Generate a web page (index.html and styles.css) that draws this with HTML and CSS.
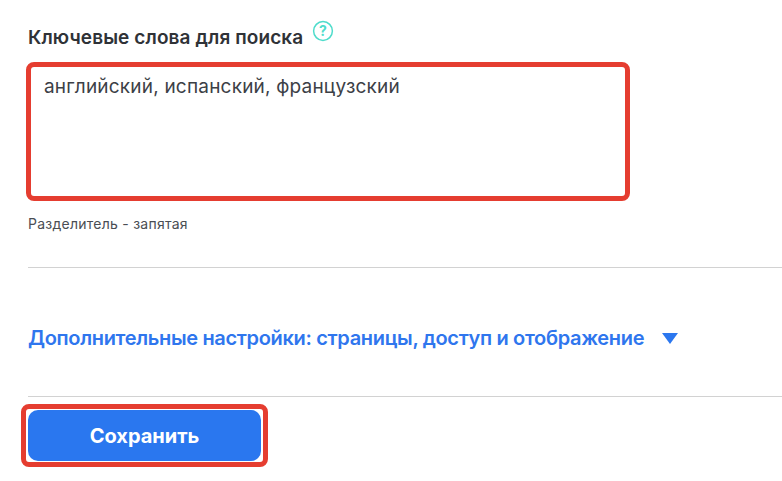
FILE: index.html
```html
<!DOCTYPE html>
<html>
<head>
    <link rel="stylesheet" href="styles.css">
</head>
<body>
<div class="form">
    <div class="label-row">
        <span class="label">Ключевые слова для поиска</span>
        <svg class="help" width="22" height="22" viewBox="0 0 22 22">
            <circle cx="11" cy="11" r="9.4" fill="#fff" stroke="#4fdccb" stroke-width="1.5"/>
            <text x="11" y="16" text-anchor="middle" class="help-mark">?</text>
        </svg>
    </div>
    <div class="keywords">английский, испанский, французский</div>
    <div class="hint">Разделитель - запятая</div>
    <div class="line line-top"></div>
    <div class="more">
        <span class="more-text">Дополнительные настройки: страницы, доступ и отображение</span>
        <span class="arrow"></span>
    </div>
    <div class="line line-bottom"></div>
    <div class="save-frame">
        <button class="save">Сохранить</button>
    </div>
</div>
</body>
</html>
```

FILE: styles.css
```css
body {
    margin: 0;
    background-color: #fff;
    font-family: Inter, "Noto Sans", sans-serif;
    color: #2f3237;
    overflow: hidden;
}

.form {
    display: flex;
    flex-direction: column;
    align-items: flex-start;
    padding: 20px 0 0 28px;
}

.label-row {
    display: flex;
    align-items: flex-start;
    height: 42px;
}

.label {
    margin: 7px 0 0 0;
    font-size: 19px;
    line-height: 22px;
    font-weight: 600;
    letter-spacing: 0.1px;
}

.help {
    margin: 0 0 0 9px;
}

.help-mark {
    font-size: 14px;
    font-weight: 700;
    fill: #4fdccb;
}

.keywords {
    box-sizing: border-box;
    width: 604px;
    height: 139px;
    margin-left: -2px;
    padding: 9px 13px;
    border: 5px solid #e53d30;
    border-radius: 8px;
    font-size: 19px;
    line-height: 22px;
    color: #3c4046;
    letter-spacing: 0.2px;
}

.hint {
    margin: 15px 0 0 0;
    font-size: 14px;
    line-height: 16px;
    color: #4a4e54;
    letter-spacing: 0.25px;
}

.line {
    width: 754px;
    height: 1px;
    background-color: #d2d2d2;
}

.line-top {
    margin-top: 35px;
}

.more {
    display: flex;
    align-items: center;
    box-sizing: border-box;
    height: 128px;
    padding-top: 12px;
    gap: 18px;
}

.more-text {
    font-size: 20px;
    font-weight: 600;
    color: #2f76ee;
    letter-spacing: -0.33px;
}

.arrow {
    width: 0;
    height: 0;
    border-left: 8px solid transparent;
    border-right: 8px solid transparent;
    border-top: 11px solid #2b77ef;
}

.save-frame {
    box-sizing: border-box;
    width: 247px;
    height: 63px;
    margin: 7px 0 0 -7px;
    padding: 1px 2px;
    border: 5px solid #e53d30;
    border-radius: 8px;
}

.save {
    display: block;
    width: 100%;
    height: 100%;
    border: none;
    border-radius: 10px;
    background-color: #2a77ef;
    color: #fff;
    font-family: inherit;
    font-size: 20px;
    font-weight: 700;
}
```
